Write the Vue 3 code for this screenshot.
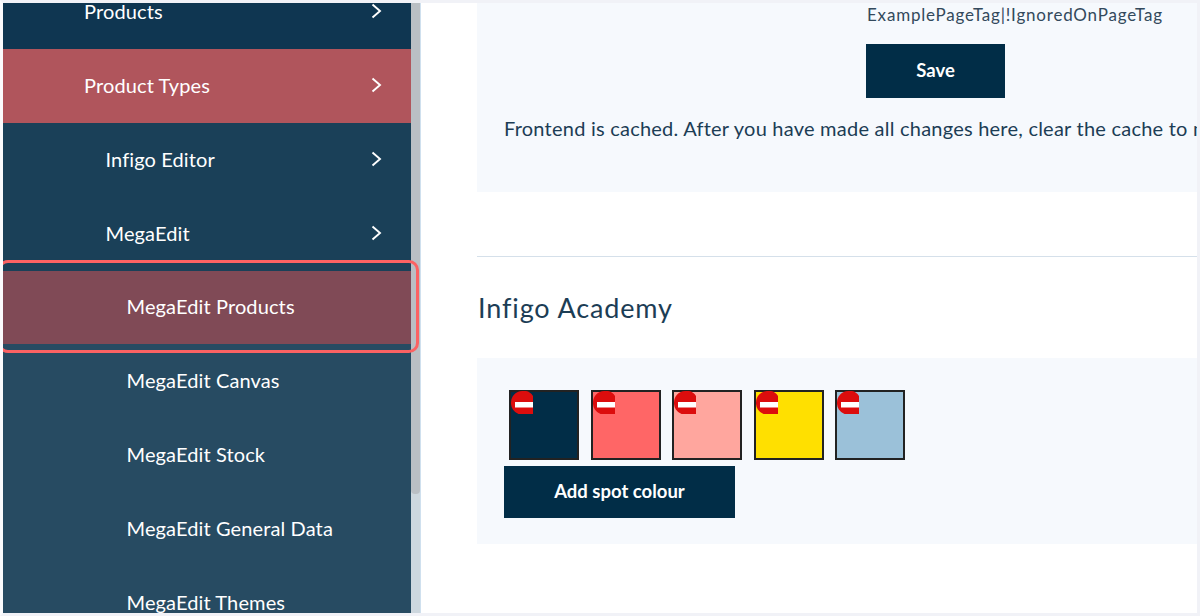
<script setup>
const rows = [
  { label: 'Products', level: 1, tone: 'tone-top', arrow: true, first: true },
  { label: 'Product Types', level: 1, tone: 'tone-rose', arrow: true },
  { label: 'Infigo Editor', level: 2, tone: 'tone-mid', arrow: true },
  { label: 'MegaEdit', level: 2, tone: 'tone-mid', arrow: true },
  { label: 'MegaEdit Products', level: 3, tone: 'tone-selected', arrow: false },
  { label: 'MegaEdit Canvas', level: 3, tone: 'tone-low', arrow: false },
  { label: 'MegaEdit Stock', level: 3, tone: 'tone-low', arrow: false },
  { label: 'MegaEdit General Data', level: 3, tone: 'tone-low', arrow: false },
  { label: 'MegaEdit Themes', level: 3, tone: 'tone-low', arrow: false }
]
const swatches = ['#012d47', '#ff6666', '#ffa69e', '#ffe000', '#9bc1d9']
</script>

<template>
  <div class="frame">
    <aside class="sidebar">
      <nav class="menu">
        <div
          v-for="row in rows"
          :key="row.label"
          class="row"
          :class="[row.tone, 'level-' + row.level, { first: row.first }]"
        >
          <span>{{ row.label }}</span>
          <svg v-if="row.arrow" class="chevron" width="11" height="16" viewBox="0 0 11 16">
            <path d="M1.5 1.5 9 8 1.5 14.5" fill="none" stroke="#fff" stroke-width="1.9" />
          </svg>
        </div>
      </nav>
      <div class="scrollbar"><div class="thumb"></div></div>
      <div class="highlight"></div>
    </aside>

    <main class="main">
      <section class="panel top-panel">
        <div class="tag">ExamplePageTag|!IgnoredOnPageTag</div>
        <button class="btn save">Save</button>
        <p class="note">Frontend is cached. After you have made all changes here, clear the cache to make them visible.</p>
      </section>
      <hr class="rule" />
      <h2 class="heading">Infigo Academy</h2>
      <section class="panel spot-panel">
        <div class="swatches">
          <div v-for="c in swatches" :key="c" class="swatch" :style="{ background: c }">
            <svg class="remove" width="22" height="23" viewBox="0 0 22 23">
              <path d="M11 0A11 11 0 0 1 22 5V23H7.5A11.5 11.5 0 0 1 0 11.5 11.5 11.5 0 0 1 11 0Z" fill="#dc0d0d" />
              <rect x="4" y="11" width="18" height="5.5" fill="#fff" />
            </svg>
          </div>
        </div>
        <button class="btn add">Add spot colour</button>
      </section>
    </main>
  </div>
</template>

<style>
html, body { margin: 0; background: #fff; }
</style>

<style scoped>
.frame {
  box-sizing: border-box;
  width: 1200px;
  height: 616px;
  display: flex;
  overflow: hidden;
  background: #fff;
  border: 3px solid #f1f2f7;
  border-left-color: #fbfbfd;
  font-family: "Lato", "Noto Sans", sans-serif;
}
.sidebar {
  position: relative;
  flex: 0 0 418px;
  display: flex;
  height: 100%;
}
.menu {
  flex: 0 0 408px;
  overflow: hidden;
  height: 100%;
}
.row {
  box-sizing: border-box;
  height: 73.8px;
  display: flex;
  align-items: center;
  justify-content: space-between;
  padding-right: 29px;
  padding-bottom: 2px;
  color: #fff;
  font-size: 20px;
  letter-spacing: 0.12px;
}
.row.first { margin-top: -27.6px; }
.level-1 { padding-left: 81px; }
.level-2 { padding-left: 102.5px; }
.level-3 { padding-left: 123.5px; }
.tone-top { background: #0f3651; }
.tone-rose { background: #b0555c; }
.tone-mid { background: #1a4058; }
.tone-selected { background: #804a56; }
.tone-low { background: #274b62; }
.chevron { display: block; }
.scrollbar {
  flex: 0 0 10px;
  background: #cdd7de;
  border-right: 1px solid #cfe0ee;
  box-sizing: border-box;
}
.thumb {
  height: 491px;
  background: #babfc4;
  border-radius: 0 0 4px 4px;
}
.highlight {
  position: absolute;
  left: -5px;
  top: 257px;
  width: 421px;
  height: 93px;
  box-sizing: border-box;
  border: 3.5px solid #fb6263;
  border-radius: 10px;
  pointer-events: none;
}
.main {
  flex: 1;
  min-width: 0;
  padding-left: 56px;
  overflow: hidden;
  color: #1c3d55;
}
.panel { background: #f6f9fd; }
.top-panel {
  box-sizing: border-box;
  height: 189px;
  padding-left: 27px;
  overflow: hidden;
}
.tag {
  margin: 0 0 0 363px;
  height: 24px;
  line-height: 24px;
  font-size: 17px;
  letter-spacing: 0.8px;
  color: #33495c;
  white-space: nowrap;
}
.btn {
  display: block;
  border: 0;
  background: #012d47;
  color: #fff;
  font-family: inherit;
  font-weight: 700;
  font-size: 18.5px;
  padding: 0 0 2px;
}
.save {
  width: 139px;
  height: 54px;
  margin: 17px 0 0 362px;
}
.note {
  margin: 16px 0 0;
  font-size: 20px;
  line-height: 28px;
  letter-spacing: 0.23px;
  white-space: nowrap;
}
.rule {
  margin: 64px 0 0;
  border: 0;
  height: 1px;
  background: #d5e0ea;
}
.heading {
  margin: 32px 0 0 1px;
  height: 37px;
  line-height: 37px;
  font-size: 27px;
  font-weight: 400;
  letter-spacing: 0.87px;
}
.spot-panel {
  box-sizing: border-box;
  height: 186px;
  margin-top: 32px;
  padding: 32px 0 0 27px;
}
.swatches {
  display: flex;
  gap: 11.5px;
  padding-left: 5px;
}
.swatch {
  box-sizing: border-box;
  width: 70px;
  height: 70px;
  border: 2px solid #222;
  position: relative;
}
.remove {
  position: absolute;
  left: 0;
  top: -1px;
}
.add {
  width: 231px;
  height: 52px;
  margin-top: 6px;
}
</style>
